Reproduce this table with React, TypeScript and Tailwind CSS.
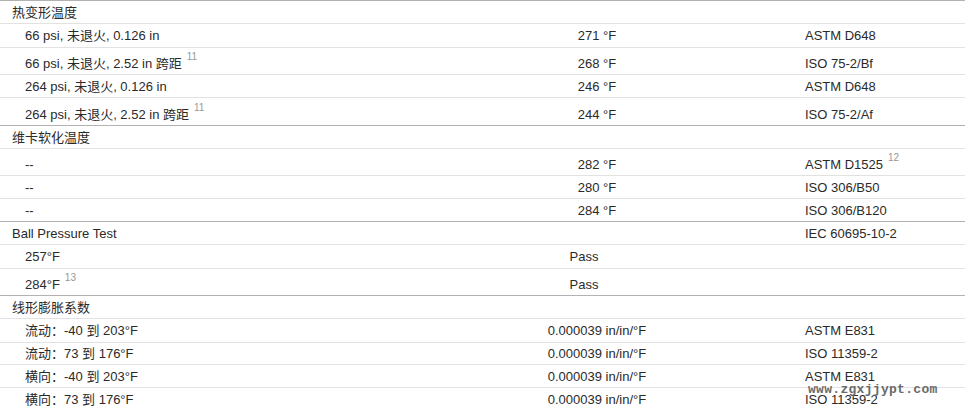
import React from 'react';

type Row = {
  label: React.ReactNode;
  value?: string;
  valuePad?: boolean;
  method?: React.ReactNode;
  h: string;
  sup?: boolean;
};

type Group = { title: string; method?: string; h: string; rows: Row[] };

const Sup = ({ n }: { n: string }) => (
  <sup className="ml-[5px] text-[10px] -top-[8px] text-[#999]">{n}</sup>
);

const groups: Group[] = [
  {
    title: '热变形温度',
    h: 'h-[23px]',
    rows: [
      { label: '66 psi, 未退火, 0.126 in', value: '271 °F', method: 'ASTM D648', h: 'h-[24px]' },
      { label: <>66 psi, 未退火, 2.52 in 跨距<Sup n="11" /></>, value: '268 °F', method: 'ISO 75-2/Bf', h: 'h-[27px]', sup: true },
      { label: '264 psi, 未退火, 0.126 in', value: '246 °F', method: 'ASTM D648', h: 'h-[23px]' },
      { label: <>264 psi, 未退火, 2.52 in 跨距<Sup n="11" /></>, value: '244 °F', method: 'ISO 75-2/Af', h: 'h-[28px]', sup: true },
    ],
  },
  {
    title: '维卡软化温度',
    h: 'h-[23px]',
    rows: [
      { label: '--', value: '282 °F', method: <>ASTM D1525<Sup n="12" /></>, h: 'h-[27px]', sup: true },
      { label: '--', value: '280 °F', method: 'ISO 306/B50', h: 'h-[23px]' },
      { label: '--', value: '284 °F', method: 'ISO 306/B120', h: 'h-[23px]' },
    ],
  },
  {
    title: 'Ball Pressure Test',
    method: 'IEC 60695-10-2',
    h: 'h-[23px]',
    rows: [
      { label: '257°F', value: 'Pass', valuePad: true, h: 'h-[24px]' },
      { label: <>284°F<Sup n="13" /></>, value: 'Pass', valuePad: true, h: 'h-[27px]', sup: true },
    ],
  },
  {
    title: '线形膨胀系数',
    h: 'h-[23px]',
    rows: [
      { label: '流动：-40 到 203°F', value: '0.000039 in/in/°F', method: 'ASTM E831', h: 'h-[24px]' },
      { label: '流动：73 到 176°F', value: '0.000039 in/in/°F', method: 'ISO 11359-2', h: 'h-[22px]' },
      { label: '横向：-40 到 203°F', value: '0.000039 in/in/°F', method: 'ASTM E831', h: 'h-[23px]' },
      { label: '横向：73 到 176°F', value: '0.000039 in/in/°F', method: 'ISO 11359-2', h: 'h-[23px]' },
    ],
  },
];

export default function App() {
  return (
    <div className="relative w-[965px] h-[410px] overflow-hidden bg-white text-[13px] text-[#2a2a2a] font-['Liberation_Sans','Noto_Sans_CJK_SC',sans-serif] leading-none border-t border-[#b2b2b2]">
      {groups.map((g, gi) => (
        <div key={gi}>
          <div className={`grid grid-cols-[535px_124px_1fr] items-center border-b border-[#e2e2e2] ${g.h}`}>
            <div className="pl-[12px] whitespace-nowrap">{g.title}</div>
            <div />
            <div className="pl-[146px] whitespace-nowrap">{g.method}</div>
          </div>
          {g.rows.map((r, ri) => (
            <div
              key={ri}
              className={`grid grid-cols-[535px_124px_1fr] items-center border-b ${r.h} ${r.sup ? 'pt-[5px]' : ''} ${ri < g.rows.length - 1 ? 'border-[#e2e2e2]' : 'border-[#b2b2b2]'}`}
            >
              <div className="pl-[25px] whitespace-nowrap">{r.label}</div>
              <div className={`text-center whitespace-nowrap ${r.valuePad ? 'pr-[26px]' : ''}`}>{r.value}</div>
              <div className="pl-[146px] whitespace-nowrap">{r.method}</div>
            </div>
          ))}
        </div>
      ))}
      <div className="absolute left-[808px] top-[382px] font-['Liberation_Mono',monospace] font-bold text-[13px] text-[#6a6a6a] tracking-[0.3px]">
        www.zgxjjypt.com
      </div>
    </div>
  );
}
